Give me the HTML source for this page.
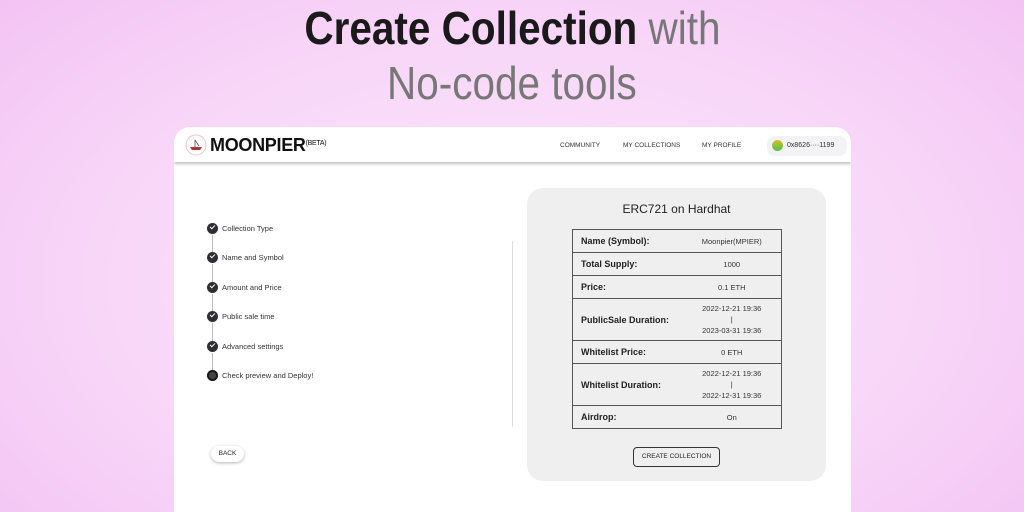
<!DOCTYPE html>
<html><head><meta charset="utf-8"><style>
*{margin:0;padding:0;box-sizing:border-box}
html,body{width:1024px;height:512px;overflow:hidden}
body{position:relative;font-family:"Liberation Sans",sans-serif;
background:radial-gradient(ellipse 700px 420px at 50% 55%,#fbe6fb 0%,#f8d6f8 60%,#f3c3f3 100%);}
.t{position:absolute;left:0;width:1024px;text-align:center;white-space:nowrap}
.t span{display:inline-block;transform:scaleX(0.88);transform-origin:center}
.card{position:absolute;left:174px;top:127px;width:677px;height:385px;background:#fff;border-radius:16px 16px 0 0;overflow:hidden}
.nav{position:absolute;left:0;top:0;width:677px;height:35px;background:#fff;box-shadow:0 2px 3px rgba(0,0,0,.25)}
.abs{position:absolute}
.step{position:absolute;left:33px;font-size:7.5px;color:#333}
.step i{position:absolute;left:0;top:-1px;width:11px;height:11px;border-radius:50%;background:#2d2d33}
.step i:after{content:"";position:absolute;left:3px;top:2px;width:4px;height:2px;border-left:1.4px solid #fff;border-bottom:1.4px solid #fff;transform:rotate(-45deg)}
.step i.n:after{display:none}
.step b{font-weight:normal;position:absolute;left:15px;top:0;white-space:nowrap}
.line{position:absolute;left:38px;width:1px;height:18px;background:#bbb}
table{position:absolute;left:45px;top:41px;width:210px;border-collapse:collapse;font-size:9px;color:#222}
td{border-top:1.5px solid #555;border-bottom:1.5px solid #555;height:23px;padding:0 8px;white-space:nowrap}
td.k{border-left:1.5px solid #555;font-weight:bold;width:110px;padding-right:0}
td.v{border-right:1.5px solid #555;text-align:center;font-size:7.5px;color:#333;padding:0 4px}
</style></head><body>
<div class="t" style="top:3px;font-size:46px;line-height:50px"><span><b style="color:#1a1a1a">Create Collection</b> <span style="color:#777;transform:none">with</span></span></div>
<div class="t" style="top:58px;font-size:46px;line-height:50px;color:#777"><span>No-code tools</span></div>
<div class="card">
 <div class="nav">
  <svg class="abs" style="left:10px;top:7px" width="24" height="22" viewBox="0 0 24 22"><circle cx="12" cy="11" r="10" fill="none" stroke="#e9c9c9" stroke-width="1"/><path d="M6 13 L18 13 L16 16 L8 16Z" fill="#a33"/><path d="M11 6 L11 13 M11 6 L15 12" stroke="#555" stroke-width="0.8" fill="none"/></svg>
  <div class="abs" style="left:36px;top:8px;font-size:18px;font-weight:bold;color:#111;letter-spacing:-0.3px">MOONPIER<span style="font-size:7px;font-weight:normal;vertical-align:6px">(BETA)</span></div>
  <div class="abs" style="left:386px;top:15px;font-size:6.5px;color:#333">COMMUNITY</div>
  <div class="abs" style="left:449px;top:15px;font-size:6.5px;color:#333">MY COLLECTIONS</div>
  <div class="abs" style="left:528px;top:15px;font-size:6.5px;color:#333">MY PROFILE</div>
  <div class="abs" style="left:593px;top:9px;width:80px;height:20px;border-radius:8px;background:#f3f3f5"></div>
  <div class="abs" style="left:598px;top:13px;width:11px;height:11px;border-radius:50%;background:linear-gradient(#d8c02a,#4bc34b)"></div>
  <div class="abs" style="left:613px;top:15px;font-size:7px;color:#333">0x8626····1199</div>
 </div>
 <div class="step" style="top:97px"><i></i><b>Collection Type</b></div><div class="line" style="top:108px"></div>
 <div class="step" style="top:126px"><i></i><b>Name and Symbol</b></div><div class="line" style="top:137px"></div>
 <div class="step" style="top:156px"><i></i><b>Amount and Price</b></div><div class="line" style="top:167px"></div>
 <div class="step" style="top:185px"><i></i><b>Public sale time</b></div><div class="line" style="top:196px"></div>
 <div class="step" style="top:215px"><i></i><b>Advanced settings</b></div><div class="line" style="top:226px"></div>
 <div class="step" style="top:244px"><i class="n" style="background:#444;box-shadow:inset 0 0 0 2px #1a1a1a"></i><b>Check preview and Deploy!</b></div>
 <div class="abs" style="left:37px;top:319px;width:33px;height:16px;border-radius:8px;background:#fff;box-shadow:0 1px 3px rgba(0,0,0,.3);font-size:6.5px;text-align:center;line-height:16px;color:#222">BACK</div>
 <div class="abs" style="left:338px;top:114px;width:1px;height:186px;background:#ddd"></div>
 <div class="abs" style="left:353px;top:61px;width:299px;height:293px;background:#efefef;border-radius:16px">
  <div class="abs" style="left:0;top:14px;width:299px;text-align:center;font-size:12px;color:#222">ERC721 on Hardhat</div>
  <table>
   <tr><td class="k">Name (Symbol):</td><td class="v">Moonpier(MPIER)</td></tr>
   <tr><td class="k">Total Supply:</td><td class="v">1000</td></tr>
   <tr><td class="k">Price:</td><td class="v">0.1 ETH</td></tr>
   <tr><td class="k" style="height:42px">PublicSale Duration:</td><td class="v" style="line-height:11px">2022-12-21 19:36<br>|<br>2023-03-31 19:36</td></tr>
   <tr><td class="k">Whitelist Price:</td><td class="v">0 ETH</td></tr>
   <tr><td class="k" style="height:42px">Whitelist Duration:</td><td class="v" style="line-height:11px">2022-12-21 19:36<br>|<br>2022-12-31 19:36</td></tr>
   <tr><td class="k">Airdrop:</td><td class="v">On</td></tr>
  </table>
  <div class="abs" style="left:106px;top:259px;width:87px;height:20px;border:1px solid #333;border-radius:4px;font-size:6.5px;text-align:center;line-height:18px;color:#222">CREATE COLLECTION</div>
 </div>
</div>
</body></html>
